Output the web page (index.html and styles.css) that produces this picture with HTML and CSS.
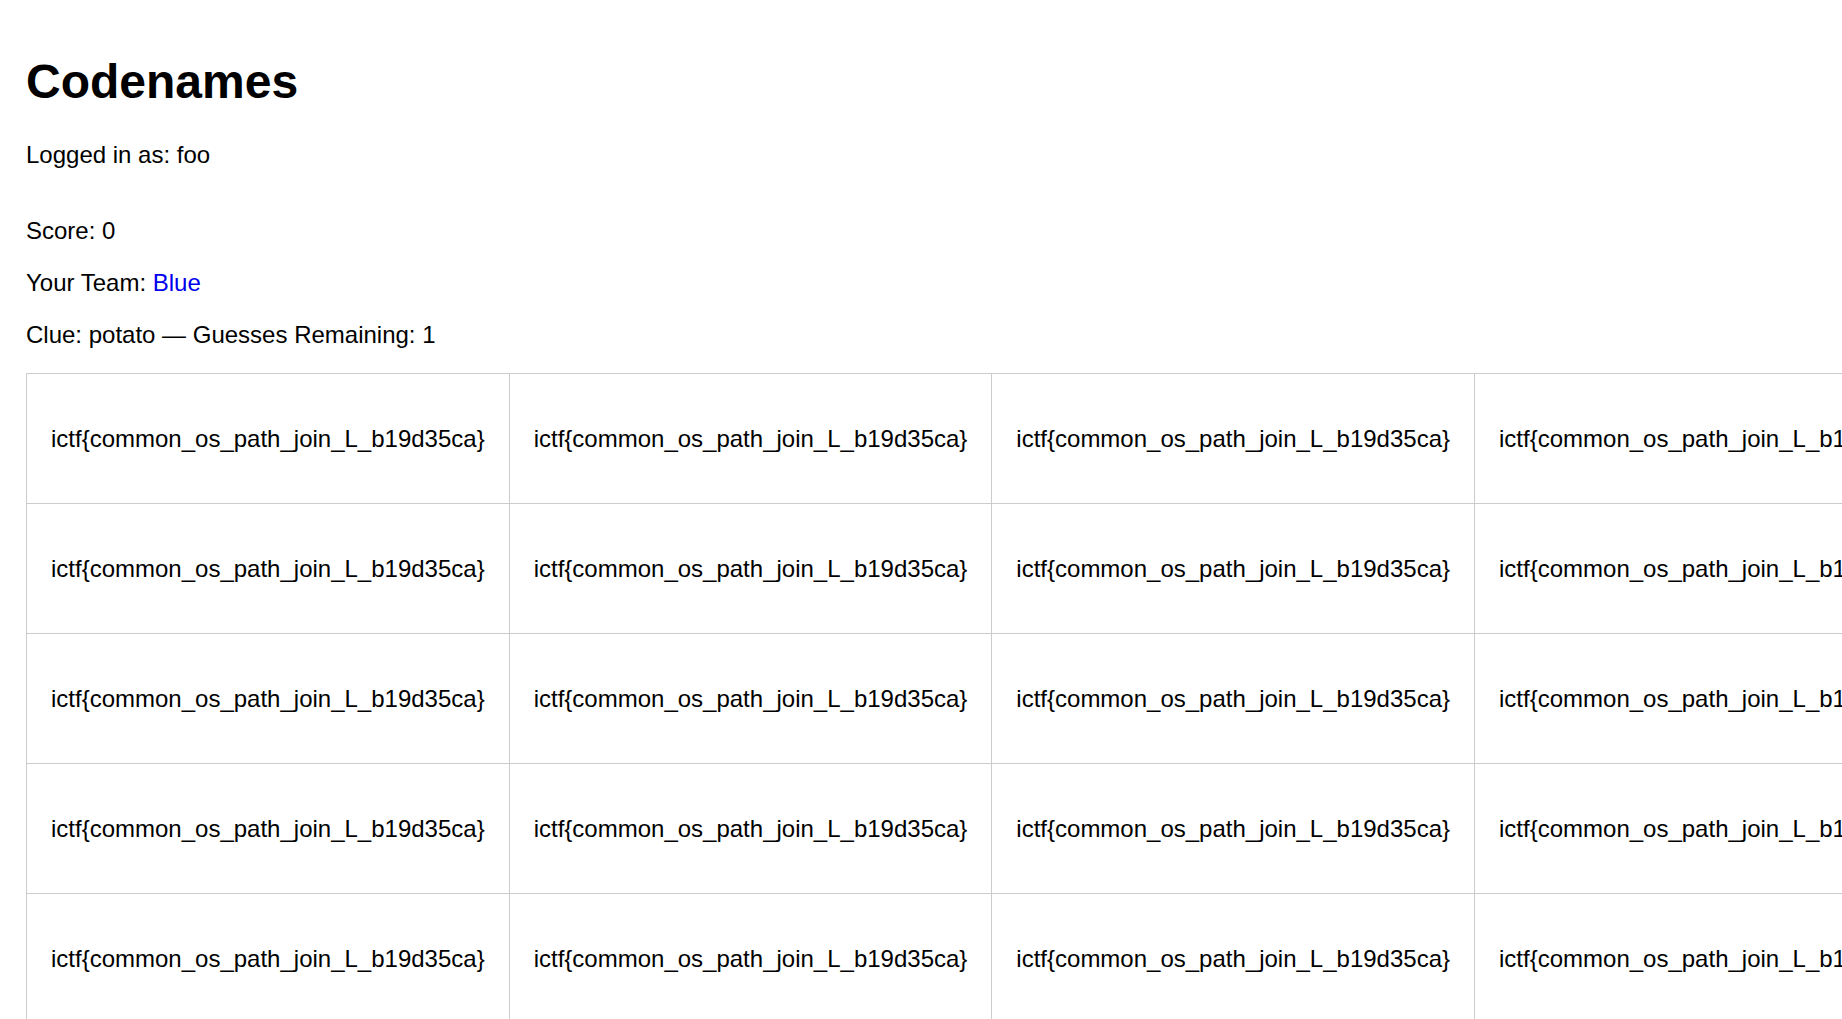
FILE: index.html
```html
<!DOCTYPE html>
<html lang="en">
<head>
<meta charset="utf-8">
<title>Codenames</title>
<link rel="stylesheet" href="styles.css">
</head>
<body>
<h1 class="title">Codenames</h1>
<p class="line">Logged in as: foo</p>
<div class="status">
  <p class="line">Score: 0</p>
  <p class="line">Your Team: <span class="team-blue">Blue</span></p>
  <p class="line">Clue: potato — Guesses Remaining: 1</p>
</div>
<div class="board">
  <div class="cell">ictf{common_os_path_join_L_b19d35ca}</div>
  <div class="cell">ictf{common_os_path_join_L_b19d35ca}</div>
  <div class="cell">ictf{common_os_path_join_L_b19d35ca}</div>
  <div class="cell">ictf{common_os_path_join_L_b19d35ca}</div>
  <div class="cell">ictf{common_os_path_join_L_b19d35ca}</div>
  <div class="cell">ictf{common_os_path_join_L_b19d35ca}</div>
  <div class="cell">ictf{common_os_path_join_L_b19d35ca}</div>
  <div class="cell">ictf{common_os_path_join_L_b19d35ca}</div>
  <div class="cell">ictf{common_os_path_join_L_b19d35ca}</div>
  <div class="cell">ictf{common_os_path_join_L_b19d35ca}</div>
  <div class="cell">ictf{common_os_path_join_L_b19d35ca}</div>
  <div class="cell">ictf{common_os_path_join_L_b19d35ca}</div>
  <div class="cell">ictf{common_os_path_join_L_b19d35ca}</div>
  <div class="cell">ictf{common_os_path_join_L_b19d35ca}</div>
  <div class="cell">ictf{common_os_path_join_L_b19d35ca}</div>
  <div class="cell">ictf{common_os_path_join_L_b19d35ca}</div>
  <div class="cell">ictf{common_os_path_join_L_b19d35ca}</div>
  <div class="cell">ictf{common_os_path_join_L_b19d35ca}</div>
  <div class="cell">ictf{common_os_path_join_L_b19d35ca}</div>
  <div class="cell">ictf{common_os_path_join_L_b19d35ca}</div>
  <div class="cell">ictf{common_os_path_join_L_b19d35ca}</div>
  <div class="cell">ictf{common_os_path_join_L_b19d35ca}</div>
  <div class="cell">ictf{common_os_path_join_L_b19d35ca}</div>
  <div class="cell">ictf{common_os_path_join_L_b19d35ca}</div>
  <div class="cell">ictf{common_os_path_join_L_b19d35ca}</div>
</div>
</body>
</html>
```

FILE: styles.css
```css
html {
  background: #ffffff;
}

body {
  margin: 0;
  padding: 22px 26px;
  font-family: "Liberation Sans", Arial, sans-serif;
  font-size: 24px;
  color: #000000;
  width: max-content;
}

.title {
  font-size: 48px;
  font-weight: bold;
  margin: 32px 0;
}

.line {
  margin: 24px 0;
}

.status {
  margin-top: 48px;
}

.team-blue {
  color: #0000ee;
}

.board {
  display: grid;
  grid-template-columns: repeat(5, max-content);
  border-top: 1px solid #cccccc;
  border-left: 1px solid #cccccc;
}

.cell {
  box-sizing: border-box;
  height: 130px;
  padding: 0 24px;
  display: flex;
  align-items: center;
  border-right: 1px solid #cccccc;
  border-bottom: 1px solid #cccccc;
  white-space: nowrap;
}
```
